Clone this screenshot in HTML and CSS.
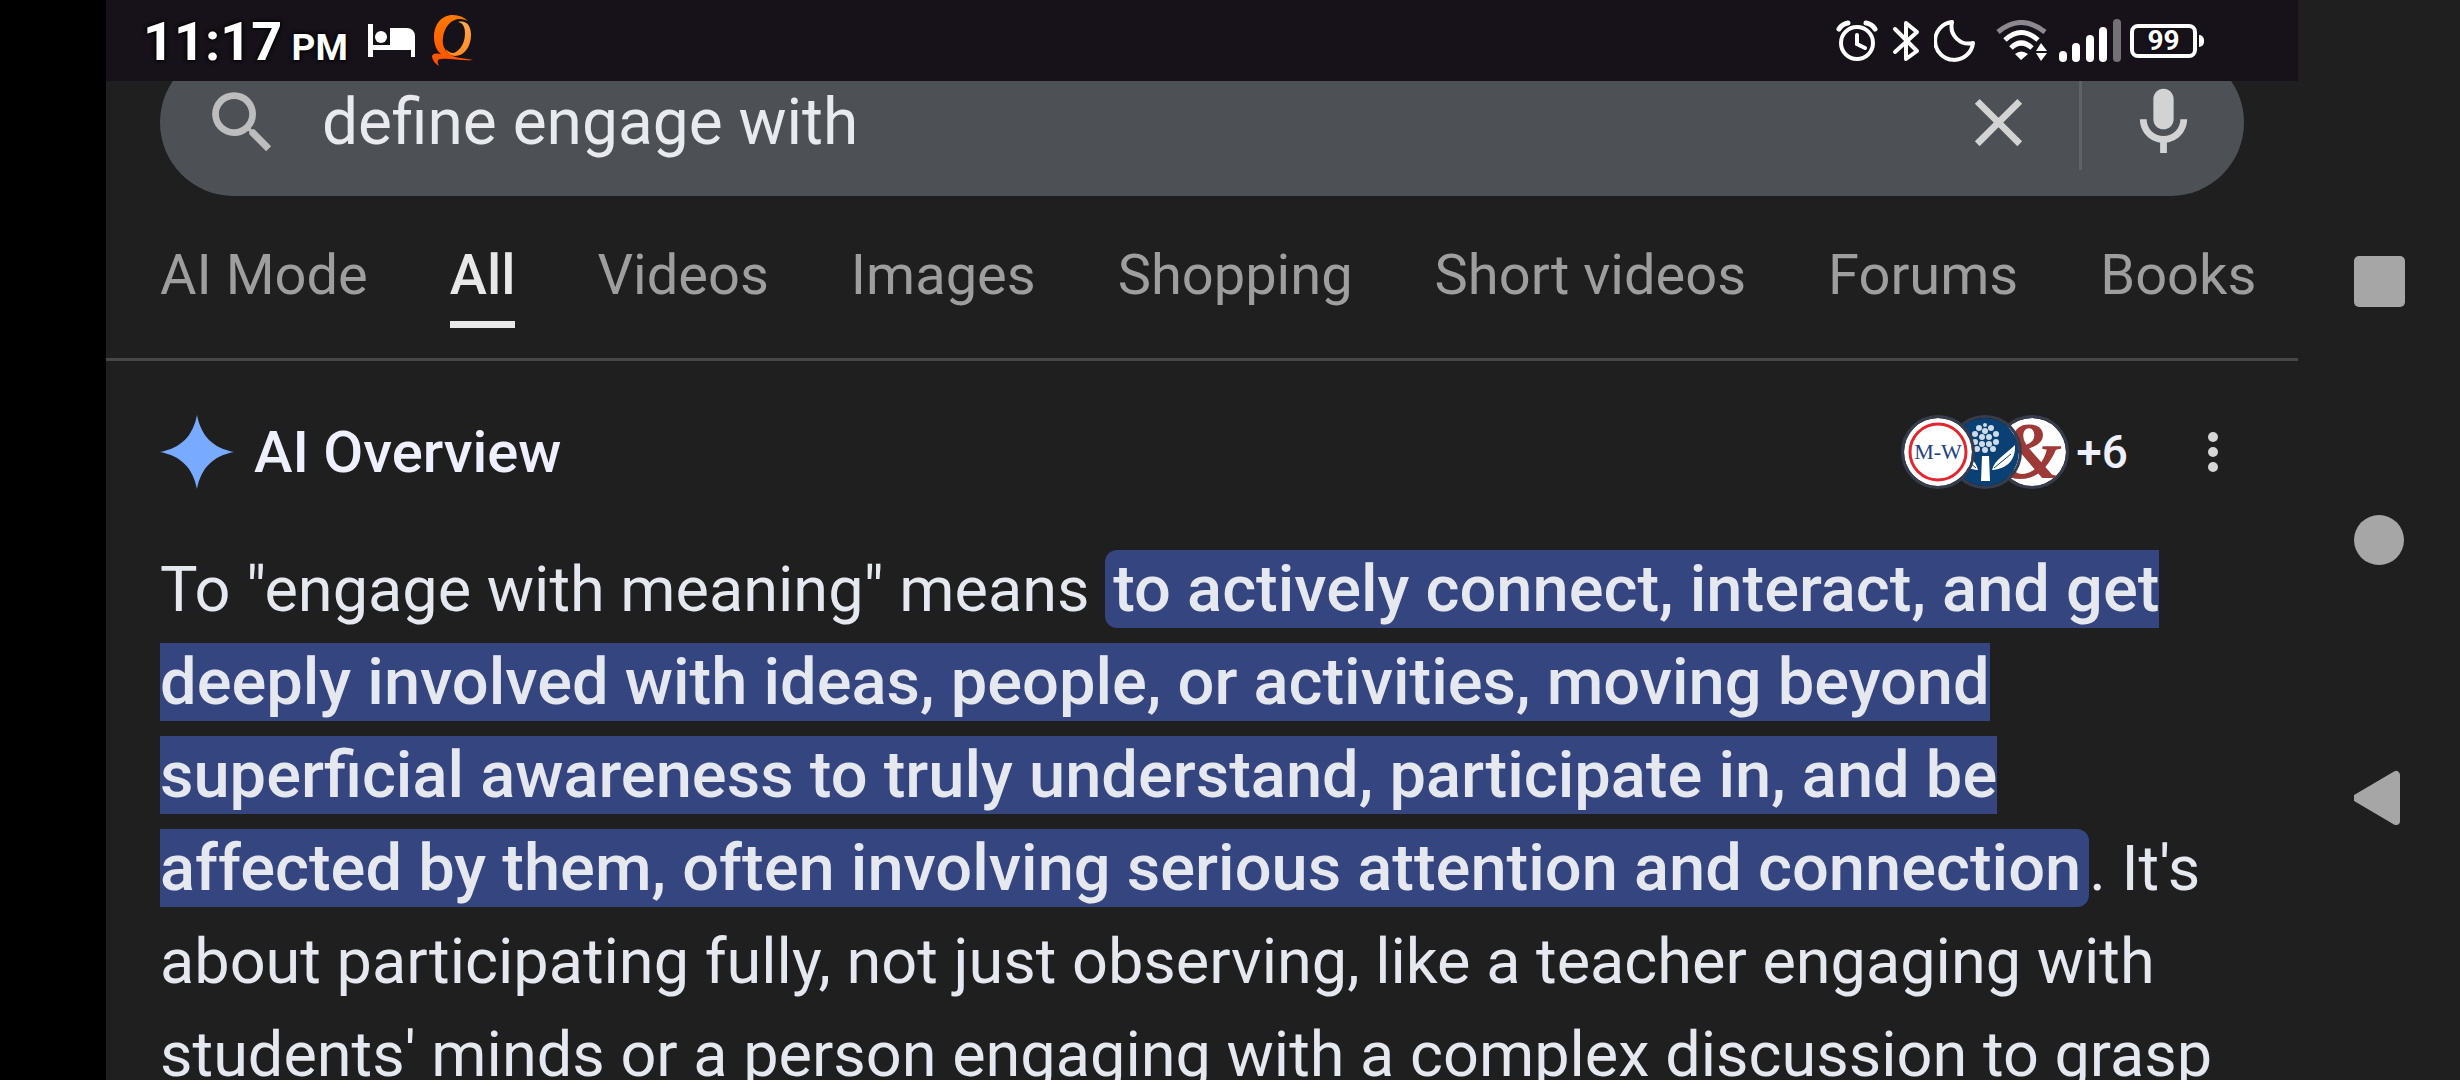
FILE: index.html
```html
<!DOCTYPE html>
<html lang="en">
<head>
<meta charset="UTF-8">
<meta name="viewport" content="width=device-width, initial-scale=1.0">
<title>define engage with</title>
<link rel="stylesheet" href="styles.css">
</head>
<body>
  <div class="screen">
    <div class="status-bar">
      <div class="status-left">
        <span class="time">11:17 <small>PM</small></span>
        <svg class="bed" width="48" height="34" viewBox="0 0 48 34" fill="#fff">
          <path d="M0 0h5v21h17V4h17a8 8 0 0 1 8 8v21h-4v-7H5v7H0z"/>
          <circle cx="13" cy="13" r="6"/>
        </svg>
        <svg class="ring" width="42" height="52" viewBox="0 0 42 52">
          <defs>
            <linearGradient id="ringDark" x1="0" y1="0" x2="0" y2="1">
              <stop offset="0" stop-color="#ff7a00"/>
              <stop offset="1" stop-color="#ff4d00"/>
            </linearGradient>
            <linearGradient id="ringLight" x1="0" y1="0" x2="0" y2="1">
              <stop offset="0" stop-color="#ffa94d"/>
              <stop offset="1" stop-color="#ff8a24"/>
            </linearGradient>
          </defs>
          <path fill="url(#ringLight)" d="M26 7C34 5 39 10 39 20C39 32 32 41 23 41C18 41 15 38 14 34C17 38 21 39 24 37C30 33 33 26 33 18C33 12 31 8 26 7Z"/>
          <path fill="url(#ringDark)" d="M36 6C32 2 27 0 21 0C9 0 2 10 2 22C2 30 5 36 9 39C5 38 1 38 0 41C0 44 3 49 7 51C5 47 5 44 9 44C18 43 30 46 41 45C31 43 21 43 16 38C12 34 10 29 11 23C12 12 19 4 28 4C31 4 34 5 36 6Z"/>
        </svg>
      </div>
      <div class="status-right">
        <svg width="42" height="42" viewBox="0 0 42 42" fill="none" stroke="#fff" stroke-width="4" stroke-linecap="round">
          <circle cx="21" cy="23" r="16"/>
          <path d="M21 15v9l8 4"/>
          <path d="M3 9Q6 4 12 3M39 9Q36 4 30 3" stroke-width="5"/>
        </svg>
        <svg class="bluetooth" width="28" height="42" viewBox="0 0 28 42" fill="none" stroke="#fff" stroke-width="4" stroke-linecap="round" stroke-linejoin="round">
          <path d="M3 9L25 31L14 39V3L25 12L3 32"/>
        </svg>
        <svg class="moon" width="42" height="42" viewBox="0 0 42 42" fill="none" stroke="#fff" stroke-width="4" stroke-linejoin="round">
          <path d="M18 2A19 19 0 1 0 39 23C27 26 15 16 18 2Z"/>
        </svg>
        <svg class="wifi" width="52" height="42" viewBox="0 0 52 42" fill="none" stroke="#fff" stroke-width="5">
          <path d="M2 12Q25 -7 49 12" stroke="#8c898e"/>
          <path d="M9 20Q25 5 42 20"/>
          <path d="M15 28Q25 18 36 28"/>
          <path d="M19 34Q25 29 32 34L25 40Z" fill="#fff" stroke="none"/>
          <path d="M40 31L45 23L51 31ZM40 33L45 41L51 33Z" fill="#fff" stroke="none"/>
        </svg>
        <svg class="signal" width="64" height="44" viewBox="0 0 64 44" fill="#fff">
          <rect x="1" y="32" width="8" height="11" rx="4"/>
          <rect x="14" y="24" width="8" height="19" rx="4"/>
          <rect x="28" y="16" width="8" height="27" rx="4"/>
          <rect x="41" y="8" width="8" height="35" rx="4"/>
          <rect x="55" y="0" width="8" height="43" rx="4" fill="#747176"/>
        </svg>
        <div class="battery"><span>99</span></div>
      </div>
    </div>

    <div class="page">
      <form class="search">
        <button type="submit" aria-label="Search">
          <svg viewBox="0 0 24 24" fill="#bdbdbd"><path d="M15.500 14h-.79l-.28-.27A6.471 6.471 0 0 0 16 9.500 6.500 6.500 0 1 0 9.500 16c1.610 0 3.090-.59 4.230-1.570l.27.28v.79l5 4.990L20.490 19l-4.990-5zm-6 0C7.010 14 5 11.990 5 9.500S7.010 5 9.500 5 14 7.010 14 9.500 11.990 14 9.500 14z"/></svg>
        </button>
        <input type="text" value="define engage with" aria-label="Search query">
        <button type="reset" aria-label="Clear">
          <svg viewBox="0 0 24 24" fill="#d3d3d3"><path d="M19 6.410L17.590 5 12 10.590 6.410 5 5 6.410 10.590 12 5 17.590 6.410 19 12 13.410 17.590 19 19 17.590 13.410 12z"/></svg>
        </button>
        <span class="divider"></span>
        <button type="button" aria-label="Voice search">
          <svg viewBox="0 0 24 24" fill="#d3d3d3"><path d="M12 14c1.660 0 3-1.340 3-3V5c0-1.660-1.340-3-3-3S9 3.340 9 5v6c0 1.660 1.340 3 3 3zM17 11c0 2.760-2.240 5-5 5s-5-2.240-5-5H5c0 3.530 2.610 6.430 6 6.920V21h2v-3.080c3.390-.49 6-3.390 6-6.920h-2z"/></svg>
        </button>
      </form>

      <nav class="tabs">
        <a href="#">AI Mode</a>
        <a href="#" class="active">All</a>
        <a href="#">Videos</a>
        <a href="#">Images</a>
        <a href="#">Shopping</a>
        <a href="#">Short videos</a>
        <a href="#">Forums</a>
        <a href="#">Books</a>
      </nav>

      <section class="overview">
        <div class="overview-head">
          <svg class="spark" viewBox="0 0 74 74" fill="#78abff"><path d="M37 0C41 21 53 33 74 37C53 41 41 53 37 74C33 53 21 41 0 37C21 33 33 21 37 0Z"/></svg>
          <h2>AI Overview</h2>
          <button class="sources" type="button">
            <svg class="source" viewBox="0 0 68 68">
              <circle cx="34" cy="34" r="34" fill="#fff"/>
              <circle cx="34" cy="34" r="28" fill="none" stroke="#e2262d" stroke-width="3"/>
              <text x="34" y="41" text-anchor="middle" font-family="Liberation Serif, serif" font-weight="400" font-size="22" fill="#24407f">M-W</text>
            </svg>
            <svg class="source" viewBox="0 0 68 68">
              <circle cx="34" cy="34" r="34" fill="#0b4074"/>
              <g fill="#cfdbe7">
                <circle cx="34" cy="7" r="2"/>
                <circle cx="28" cy="10" r="3"/><circle cx="34" cy="13" r="3"/><circle cx="40" cy="10" r="3"/>
                <circle cx="24" cy="16" r="3"/><circle cx="31" cy="19" r="3"/><circle cx="38" cy="19" r="3"/><circle cx="45" cy="16" r="3"/>
                <circle cx="24" cy="24" r="3"/><circle cx="31" cy="26" r="3"/><circle cx="38" cy="26" r="3"/><circle cx="45" cy="24" r="3"/>
                <circle cx="26" cy="31" r="3"/><circle cx="34" cy="32" r="3"/><circle cx="42" cy="31" r="3"/>
              </g>
              <g fill="#fff">
                <path d="M31 38h7l1 25h-9z"/>
                <path d="M41 52C44 41 54 37 64 27C65 42 56 51 41 52Z"/>
                <path d="M27 52C25 42 16 37 5 30C4 42 13 51 27 52Z"/>
              </g>
              <path d="M43 50L60 36M25 50L9 36" stroke="#0b4074" stroke-width="1"/>
            </svg>
            <svg class="source" viewBox="0 0 68 68">
              <circle cx="34" cy="34" r="34" fill="#fff"/>
              <text x="33" y="60" text-anchor="middle" font-family="Liberation Serif, serif" font-style="italic" font-weight="bold" font-size="80" fill="#9d3a38">&amp;</text>
            </svg>
            <span>+6</span>
          </button>
          <button class="more" type="button" aria-label="More options">
            <svg viewBox="0 0 10 42" fill="#d6d6d6"><circle cx="5" cy="6" r="5"/><circle cx="5" cy="21" r="5"/><circle cx="5" cy="36" r="5"/></svg>
          </button>
        </div>
        <p>To "engage with meaning" means <mark>to actively connect, interact, and get deeply involved with ideas, people, or activities, moving beyond superficial awareness to truly understand, participate in, and be affected by them, often involving serious attention and connection</mark>. It's about participating fully, not just observing, like a teacher engaging with students' minds or a person engaging with a complex discussion to grasp</p>
      </section>
    </div>
  </div>

  <div class="nav-bar">
    <button type="button" aria-label="Recent apps"><svg viewBox="0 0 52 56" fill="#a6a6a6"><rect y="2" width="51" height="51" rx="5"/></svg></button>
    <button type="button" aria-label="Home"><svg viewBox="0 0 52 56" fill="#a6a6a6"><circle cx="25" cy="28" r="25"/></svg></button>
    <button type="button" aria-label="Back"><svg viewBox="0 0 52 56" fill="#a6a6a6" stroke="#a6a6a6" stroke-width="8" stroke-linejoin="round"><path d="M3 28L42 5V51Z"/></svg></button>
  </div>
</body>
</html>
```
FILE: styles.css
```css
* {
  box-sizing: border-box;
}
body {
  margin: 0;
  padding-left: 106px;
  height: 100vh;
  display: flex;
  overflow: hidden;
  background-color: #000;
  color: #e6e8f0;
  font-family: Roboto, sans-serif;
}
button {
  padding: 0;
  border: none;
  background: none;
  color: inherit;
  font: inherit;
}
svg {
  display: block;
  flex: none;
}
.screen {
  flex: 1;
  min-width: 0;
  display: flex;
  flex-direction: column;
  background-color: #1f1f1f;
}

/* status bar */
.status-bar {
  flex: none;
  height: 81px;
  padding: 0 94px 0 37px;
  display: flex;
  align-items: center;
  justify-content: space-between;
  background-color: #17121a;
  color: #fff;
}
.status-left,
.status-right {
  display: flex;
  align-items: center;
}
.time {
  padding-top: 8px;
  font-size: 54px;
  font-weight: bold;
  line-height: 64px;
  text-shadow: 0 0 4px #000, 0 0 4px #000;
}
.time small {
  font-size: 37px;
  margin-left: -4px;
}
.bed {
  margin-left: 20px;
}
.ring {
  margin-left: 16px;
}
.bluetooth {
  margin-left: 14px;
}
.moon {
  margin-left: 14px;
}
.wifi {
  margin-left: 20px;
}
.signal {
  margin: 0 8px 0 10px;
}
.battery {
  position: relative;
  width: 67px;
  height: 34px;
  border: 4px solid #fff;
  border-radius: 8px;
  margin-right: 7px;
  text-align: center;
  font-size: 28px;
  font-weight: bold;
  line-height: 26px;
  text-shadow: 0 0 3px #000;
}
.battery::after {
  content: "";
  position: absolute;
  left: 65px;
  top: 7px;
  width: 5px;
  height: 12px;
  border-radius: 0 6px 6px 0;
  background-color: #fff;
}

/* search results page */
.page {
  flex: 1;
  min-height: 0;
  overflow: hidden;
}
.search {
  height: 147px;
  margin: -32px 54px 0;
  padding: 0 40px 0 42px;
  display: flex;
  align-items: center;
  border-radius: 74px;
  background-color: #4d5156;
}
.search button,
.search svg {
  width: 81px;
  height: 81px;
}
.search input {
  flex: 1;
  min-width: 0;
  margin-left: 39px;
  padding: 0;
  border: none;
  outline: none;
  background: none;
  color: #e8eaed;
  font-family: inherit;
  font-size: 64px;
}
.divider {
  width: 3px;
  height: 94px;
  margin: 0 41px 0 40px;
  background-color: #5f6368;
}
.tabs {
  display: flex;
  gap: 82px;
  padding: 46px 54px 30px;
  border-bottom: 3px solid #474747;
  white-space: nowrap;
}
.tabs a {
  padding-bottom: 13px;
  border-bottom: 7px solid transparent;
  color: #9e9e9e;
  font-size: 56px;
  line-height: 66px;
  text-decoration: none;
}
.tabs .active {
  border-color: #e8e8e8;
  color: #e8e8e8;
  font-weight: 500;
}
.overview {
  padding: 54px 80px 0 54px;
}
.overview-head {
  display: flex;
  align-items: center;
  color: #eef0ff;
}
.spark {
  width: 74px;
  height: 74px;
}
.overview h2 {
  flex: 1;
  margin: 0 0 0 20px;
  font-size: 58px;
  font-weight: 500;
}
.sources {
  display: flex;
  align-items: center;
  isolation: isolate;
  font-size: 46px;
  font-weight: 500;
}
.source {
  width: 74px;
  height: 74px;
  margin-right: -27px;
  border: 3px solid #363c4c;
  border-radius: 50%;
}
.source:nth-child(2) {
  z-index: -1;
}
.source:nth-child(3) {
  z-index: -2;
}
.sources span {
  margin-left: 34px;
}
.more {
  margin-left: 80px;
}
.more svg {
  width: 10px;
  height: 42px;
}
.overview p {
  margin: 54px 0 0;
  font-size: 63px;
  line-height: 93px;
}
mark {
  padding: 1px 8px;
  border-radius: 12px;
  background-color: #35457f;
  color: inherit;
  font-size: 65px;
  font-weight: 500;
}

/* system navigation */
.nav-bar {
  width: 162px;
  padding-left: 56px;
  display: flex;
  flex-direction: column;
  justify-content: center;
  gap: 202px;
  background-color: #1f1f1f;
}
.nav-bar svg {
  width: 52px;
  height: 56px;
}
```
